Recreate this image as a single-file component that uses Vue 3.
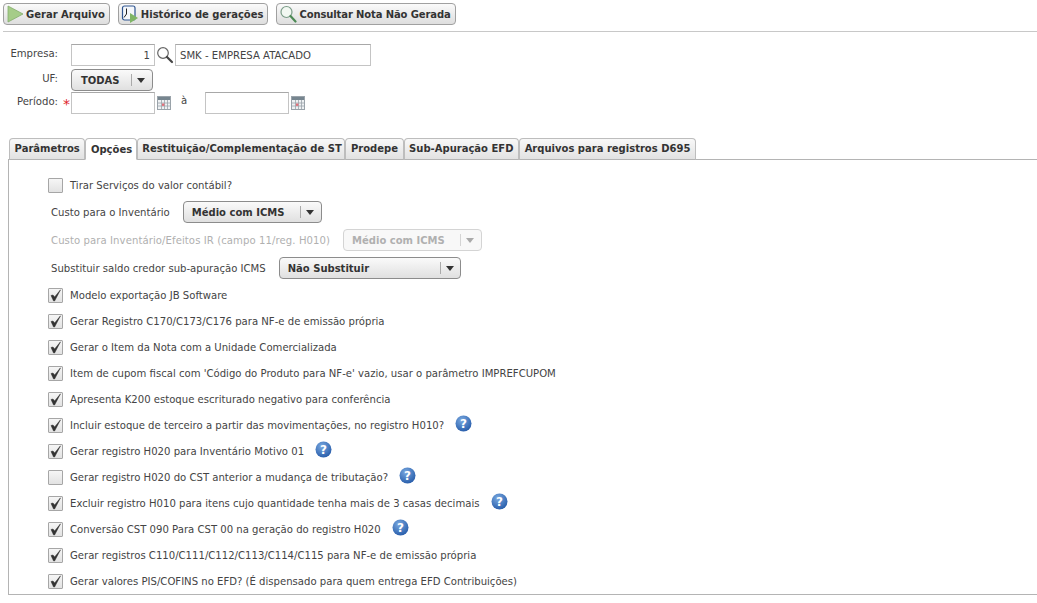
<script setup>
const tabs = ['Parâmetros','Opções','Restituição/Complementação de ST','Prodepe','Sub-Apuração EFD','Arquivos para registros D695']
const checks = [
 {t:'Modelo exportação JB Software',c:true},
 {t:'Gerar Registro C170/C173/C176 para NF-e de emissão própria',c:true},
 {t:'Gerar o Item da Nota com a Unidade Comercializada',c:true},
 {t:"Item de cupom fiscal com 'Código do Produto para NF-e' vazio, usar o parâmetro IMPREFCUPOM",c:true},
 {t:'Apresenta K200 estoque escriturado negativo para conferência',c:true},
 {t:'Incluir estoque de terceiro a partir das movimentações, no registro H010?',c:true,h:true},
 {t:'Gerar registro H020 para Inventário Motivo 01',c:true,h:true},
 {t:'Gerar registro H020 do CST anterior a mudança de tributação?',c:false,h:true},
 {t:'Excluir registro H010 para itens cujo quantidade tenha mais de 3 casas decimais',c:true,h:true},
 {t:'Conversão CST 090 Para CST 00 na geração do registro H020',c:true,h:true},
 {t:'Gerar registros C110/C111/C112/C113/C114/C115 para NF-e de emissão própria',c:true},
 {t:'Gerar valores PIS/COFINS no EFD? (É dispensado para quem entrega EFD Contribuições)',c:true},
]
</script>

<template>
  <div class="page">
    <div class="toolbar">
      <button class="btn">
        <svg width="18" height="18" viewBox="0 0 18 18"><path d="M2 1 L17 9 L2 17 Z" fill="#a5cc88" stroke="#84ad6c" stroke-width=".8" stroke-linejoin="round"/></svg>
        <span>Gerar Arquivo</span>
      </button>
      <button class="btn">
        <svg width="18" height="18" viewBox="0 0 18 18"><rect x="1.5" y="1" width="12.5" height="14" rx="2" fill="#f4f7fb" stroke="#2f5590" stroke-width="1.2"/><path d="M5.5 3.5V9L3 12.5" fill="none" stroke="#222" stroke-width="1"/><path d="M9 8 L17 13 L9 18 Z" fill="#7fb565"/></svg>
        <span>Histórico de gerações</span>
      </button>
      <button class="btn tight">
        <svg width="18" height="18" viewBox="0 0 18 18"><circle cx="7.5" cy="7" r="5.5" fill="#f2f8f2" stroke="#7b9c88" stroke-width="1.2"/><path d="M11.5 11 L16.5 16.5" stroke="#4d8a55" stroke-width="2.2" stroke-linecap="round"/></svg>
        <span>Consultar Nota Não Gerada</span>
      </button>
    </div>

    <div class="form">
      <div class="frow r1">
        <label class="lbl">Empresa:</label>
        <input class="inp num" value="1" />
        <svg class="lupa" width="18" height="18" viewBox="0 0 18 18"><circle cx="7" cy="7" r="5.3" fill="none" stroke="#666" stroke-width="1.2"/><path d="M11 11 L16 16" stroke="#444" stroke-width="2.2" stroke-linecap="round"/></svg>
        <input class="inp name" value="SMK - EMPRESA ATACADO" />
      </div>
      <div class="frow r2">
        <label class="lbl">UF:</label>
        <div class="sel uf"><b>TODAS</b><i class="sep"></i><i class="arrow"></i></div>
      </div>
      <div class="frow r3">
        <label class="lbl">Período:<em>*</em></label>
        <input class="inp num" />
        <svg class="cal" width="14" height="14" viewBox="0 0 14 14"><rect x=".5" y=".5" width="13" height="13" fill="#eef1f3" stroke="#9aa3aa"/><rect x="1" y="1" width="12" height="3" fill="#76858f"/><path d="M1 7h12M1 10h12M4.5 4v9M7.5 4v9M10.5 4v9" stroke="#9aa3aa" stroke-width=".8"/><rect x="5" y="7.5" width="2.4" height="2.4" fill="#e0707a"/></svg>
        <span class="a">à</span>
        <input class="inp num" />
        <svg class="cal" width="14" height="14" viewBox="0 0 14 14"><rect x=".5" y=".5" width="13" height="13" fill="#eef1f3" stroke="#9aa3aa"/><rect x="1" y="1" width="12" height="3" fill="#76858f"/><path d="M1 7h12M1 10h12M4.5 4v9M7.5 4v9M10.5 4v9" stroke="#9aa3aa" stroke-width=".8"/><rect x="5" y="7.5" width="2.4" height="2.4" fill="#e0707a"/></svg>
      </div>
    </div>

    <div class="tabs">
      <div v-for="t in tabs" :key="t" class="tab" :class="{active: t==='Opções'}">{{ t }}</div>
    </div>

    <div class="panel">
      <div class="row first"><span class="cb"></span><span>Tirar Serviços do valor contábil?</span></div>
      <div class="row sr s1"><span class="st">Custo para o Inventário</span><div class="sel m1"><b>Médio com ICMS</b><i class="sep"></i><i class="arrow"></i></div></div>
      <div class="row sr s2 dis"><span class="st">Custo para Inventário/Efeitos IR (campo 11/reg. H010)</span><div class="sel m2 off"><b>Médio com ICMS</b><i class="sep"></i><i class="arrow"></i></div></div>
      <div class="row sr s3"><span class="st">Substituir saldo credor sub-apuração ICMS</span><div class="sel m3"><b>Não Substituir</b><i class="sep"></i><i class="arrow"></i></div></div>
      <div v-for="c in checks" :key="c.t" class="row chk">
        <span class="cb">
          <svg v-if="c.c" width="13" height="13" viewBox="0 0 13 13"><path d="M2 6.5 L4 6 L5.6 8 L11.5 .8 L5.6 12 L4.6 12 Z" fill="#333" stroke="#333" stroke-width=".5" stroke-linejoin="round"/></svg>
        </span>
        <span>{{ c.t }}</span>
        <svg v-if="c.h" class="help" width="17" height="17" viewBox="0 0 17 17"><defs><radialGradient id="hg" cx=".4" cy=".3" r=".8"><stop offset="0" stop-color="#7aa9e0"/><stop offset="1" stop-color="#1f55a5"/></radialGradient></defs><circle cx="8.5" cy="8.5" r="8" fill="url(#hg)"/><text x="8.5" y="12.5" text-anchor="middle" class="q">?</text></svg>
      </div>
    </div>
  </div>
</template>

<style>
html, body { margin: 0; background: #fff; overflow: hidden; }
</style>
<style scoped>
.page { width: 1037px; height: 603px; overflow: hidden; font-family: "DejaVu Sans", Verdana, sans-serif; font-size: 10.1px; color: #444; box-sizing: border-box; }
.toolbar { display: flex; padding: 3px 0 6px 0; margin-left: 3px; height: 22px; border-bottom: 1px solid #c8c8c8; box-sizing: content-box; }
.btn { height: 22px; margin: 0 8px 0 0; display: flex; align-items: center; gap: 2px; padding: 0 4px 0 2px; border: 1px solid #a0a0a0; border-radius: 4px; background: linear-gradient(#fafafa, #dedede); font: bold 10px "DejaVu Sans", sans-serif; color: #333; box-sizing: border-box; white-space: nowrap; }
.tight { letter-spacing: -0.12px; }
.form { padding-top: 12px; height: 93px; box-sizing: border-box; }
.frow { display: flex; align-items: center; height: 22px; }
.frow.r2 { margin-top: 3px; }
.frow.r3 { margin-top: 1px; }
.lbl { width: 71px; box-sizing: border-box; text-align: right; padding-right: 13px; position: relative; margin-top: -4px; }
.lbl em { position: absolute; right: 1px; top: 0; color: #e0222a; font-style: normal; font-size: 14px; }
.inp { height: 22px; box-sizing: border-box; border: 1px solid #c4c4c4; border-top-color: #a8a8a8; background: #fff; font: 10.1px "DejaVu Sans", sans-serif; color: #444; padding: 0 4px; outline: none; margin: 0; }
.inp.num { width: 84px; text-align: right; }
.inp.name { width: 196px; text-align: left; margin-left: 1px; }
.lupa { margin-left: 1px; }
.cal { margin-left: 2px; }
.a { margin: 0 0 6px 10px; width: 24px; }
.sel { height: 22px; box-sizing: border-box; border: 1px solid #8c8c8c; border-radius: 4px; background: linear-gradient(#fafafa, #e0e0e0); display: flex; align-items: center; position: relative; }
.sel b { font: bold 10px "DejaVu Sans", sans-serif; color: #333; padding-left: 8px; white-space: nowrap; }
.uf b { padding-left: 9px; }
.sep { position: absolute; top: 4px; bottom: 4px; width: 1px; background: #aaa; }
.arrow { position: absolute; top: 8px; width: 0; height: 0; border-left: 4px solid transparent; border-right: 4px solid transparent; border-top: 5px solid #333; }
.uf { width: 82px; }
.uf .sep { left: 59px; } .uf .arrow { left: 65px; }
.m1 { width: 139px; } .m1 .sep { left: 116px; } .m1 .arrow { left: 122px; }
.m2 { width: 139px; } .m2 .sep { left: 116px; } .m2 .arrow { left: 122px; }
.m3 { width: 182px; } .m3 .sep { left: 160px; } .m3 .arrow { left: 166px; }
.off { border-color: #d4d4d4; background: #f8f8f8; }
.off b { color: #b0b0b0; }
.off .arrow { border-top-color: #aaa; }
.off .sep { background: #d4d4d4; }
.tabs { display: flex; height: 22px; padding-left: 9px; margin-top: 13px; box-sizing: border-box; }
.tab { height: 22px; box-sizing: border-box; border: 1px solid #bdbdbd; border-bottom: 1px solid #b4b4b4; border-radius: 4px 4px 0 0; background: linear-gradient(#f8f8f8, #e2e2e2); font: bold 10px/20px "DejaVu Sans", sans-serif; color: #333; padding: 0 4.6px; white-space: nowrap; }
.tab:nth-child(3) { padding-right: 2.6px; }
.tab.active { background: #fff; border-bottom-color: #fff; line-height: 22px; position: relative; z-index: 1; padding: 0 3.5px 0 4.5px; }
.panel { margin-left: 8px; margin-top: -1px; height: 436px; box-sizing: border-box; border: 1px solid #b4b4b4; padding: 12px 0 0 39px; width: 1040px; }
.row { display: flex; align-items: center; white-space: nowrap; height: 26px; }
.first { gap: 7px; }
.sr { padding-left: 3px; }
.sr .st { margin-right: 13px; }
.sr.s2 .st { margin-right: 13px; letter-spacing: 0.08px; }
.s1 { margin-top: 1px; }
.s2 { margin-top: 2px; }
.s3 { margin-top: 2px; }
.dis .st { color: #b0b0b0; }
.chk { gap: 7px; }
.s3 + .chk { margin-top: 1px; }
.cb { width: 15px; height: 15px; box-sizing: border-box; border: 1px solid #a6a6a6; border-radius: 1px; background: linear-gradient(#f6f6f6, #e2e2e2); display: inline-flex; align-items: center; justify-content: center; flex: none; }
.help { margin-left: 4px; margin-top: -4px; }
.q { font: bold 12px "DejaVu Sans", sans-serif; fill: #fff; }
</style>
